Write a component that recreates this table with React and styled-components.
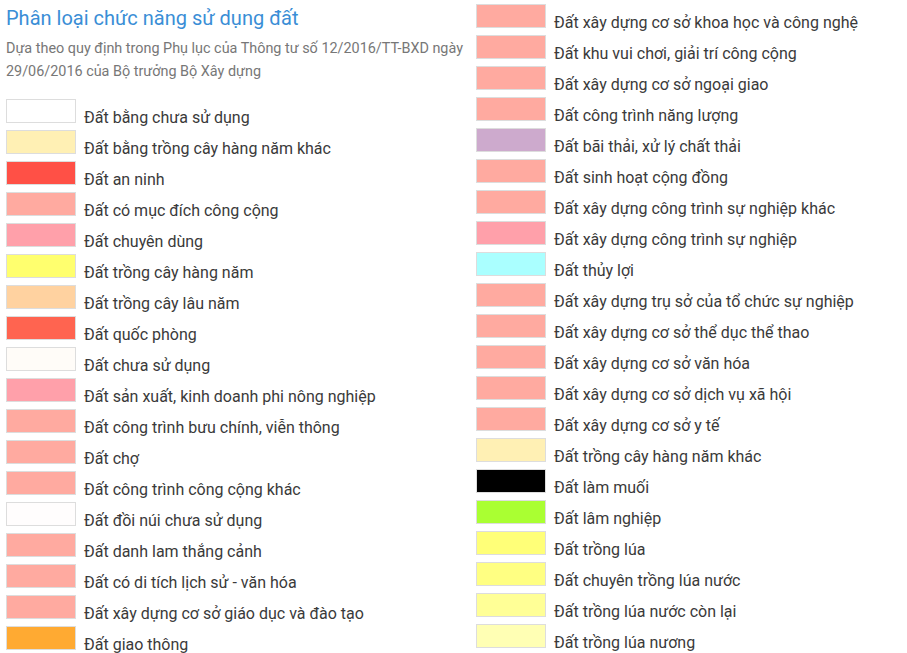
import React from "react";
import styled, { createGlobalStyle } from "styled-components";

const GlobalStyle = createGlobalStyle`
  html, body {
    margin: 0;
    padding: 0;
    background: #fff;
  }
  body {
    font-family: Roboto, "Liberation Sans", Arial, sans-serif;
    color: #333;
  }
`;

const leftItems = [
  ["Đất bằng chưa sử dụng", "#ffffff"],
  ["Đất bằng trồng cây hàng năm khác", "#fff0b4"],
  ["Đất an ninh", "#ff5046"],
  ["Đất có mục đích công cộng", "#ffaaa0"],
  ["Đất chuyên dùng", "#ffa0aa"],
  ["Đất trồng cây hàng năm", "#ffff6e"],
  ["Đất trồng cây lâu năm", "#ffd2a0"],
  ["Đất quốc phòng", "#ff6450"],
  ["Đất chưa sử dụng", "#fffcf8"],
  ["Đất sản xuất, kinh doanh phi nông nghiệp", "#ffa0aa"],
  ["Đất công trình bưu chính, viễn thông", "#ffaaa0"],
  ["Đất chợ", "#ffaaa0"],
  ["Đất công trình công cộng khác", "#ffaaa0"],
  ["Đất đồi núi chưa sử dụng", "#fffdfd"],
  ["Đất danh lam thắng cảnh", "#ffaaa0"],
  ["Đất có di tích lịch sử - văn hóa", "#ffaaa0"],
  ["Đất xây dựng cơ sở giáo dục và đào tạo", "#ffaaa0"],
  ["Đất giao thông", "#ffaa32"],
];

const rightItems = [
  ["Đất xây dựng cơ sở khoa học và công nghệ", "#ffaaa0"],
  ["Đất khu vui chơi, giải trí công cộng", "#ffaaa0"],
  ["Đất xây dựng cơ sở ngoại giao", "#ffaaa0"],
  ["Đất công trình năng lượng", "#ffaaa0"],
  ["Đất bãi thải, xử lý chất thải", "#cdaacd"],
  ["Đất sinh hoạt cộng đồng", "#ffaaa0"],
  ["Đất xây dựng công trình sự nghiệp khác", "#ffaaa0"],
  ["Đất xây dựng công trình sự nghiệp", "#ffa0aa"],
  ["Đất thủy lợi", "#aaffff"],
  ["Đất xây dựng trụ sở của tổ chức sự nghiệp", "#ffaaa0"],
  ["Đất xây dựng cơ sở thể dục thể thao", "#ffaaa0"],
  ["Đất xây dựng cơ sở văn hóa", "#ffaaa0"],
  ["Đất xây dựng cơ sở dịch vụ xã hội", "#ffaaa0"],
  ["Đất xây dựng cơ sở y tế", "#ffaaa0"],
  ["Đất trồng cây hàng năm khác", "#fff0b4"],
  ["Đất làm muối", "#000000"],
  ["Đất lâm nghiệp", "#aaff32"],
  ["Đất trồng lúa", "#ffff78"],
  ["Đất chuyên trồng lúa nước", "#ffff82"],
  ["Đất trồng lúa nước còn lại", "#ffff96"],
  ["Đất trồng lúa nương", "#ffffb4"],
];

const Page = styled.div`
  display: grid;
  grid-template-columns: 462px 1fr;
  column-gap: 8px;
  padding: 4px 0 0 6px;
`;

const Column = styled.div`
  display: flex;
  flex-direction: column;
`;

const Title = styled.h2`
  margin: 2px 0 0;
  font-size: 20px;
  font-weight: 400;
  line-height: 24px;
  color: #3a8ed6;
`;

const Subtitle = styled.p`
  margin: 7px 0 16px;
  font-size: 14.4px;
  line-height: 23px;
  color: #777;
`;

const Row = styled.div`
  display: flex;
  align-items: baseline;
  height: 31px;
`;

const Swatch = styled.div`
  flex: none;
  width: 70px;
  height: 24px;
  box-sizing: border-box;
  border: 1px solid #ddd;
  background: ${(p) => p.$color};
  margin-right: 8px;
`;

const Label = styled.span`
  font-size: 16px;
  color: #3a3a3a;
  white-space: nowrap;
`;

const Legend = ({ items }) =>
  items.map(([name, color]) => (
    <Row key={name + color}>
      <Swatch $color={color} />
      <Label>{name}</Label>
    </Row>
  ));

export default function App() {
  return (
    <>
      <GlobalStyle />
      <Page>
        <Column>
          <Title>Phân loại chức năng sử dụng đất</Title>
          <Subtitle>
            Dựa theo quy định trong Phụ lục của Thông tư số 12/2016/TT-BXD ngày
            29/06/2016 của Bộ trưởng Bộ Xây dựng
          </Subtitle>
          <Legend items={leftItems} />
        </Column>
        <Column>
          <Legend items={rightItems} />
        </Column>
      </Page>
    </>
  );
}
